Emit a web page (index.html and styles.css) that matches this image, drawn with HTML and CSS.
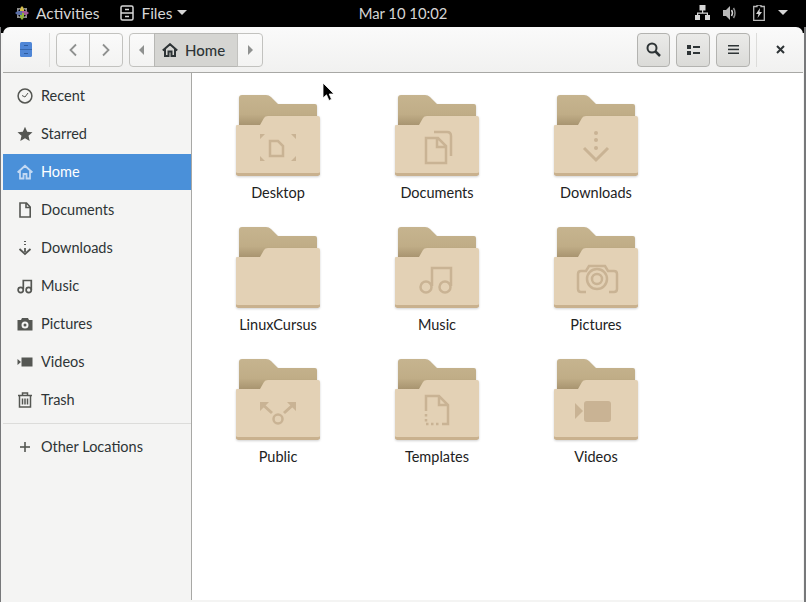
FILE: index.html
```html
<!DOCTYPE html>
<html lang="en">
<head>
    <meta charset="UTF-8">
    <title>Home - Files</title>
    <link rel="stylesheet" href="styles.css">
</head>
<body>

<svg class="defs" width="0" height="0">
    <defs>
        <linearGradient id="back-fill" x1="0" y1="0" x2="0" y2="1">
            <stop offset="0" stop-color="#c6b48f"/>
            <stop offset="0.6" stop-color="#c0ad87"/>
            <stop offset="1" stop-color="#a4906c"/>
        </linearGradient>
        <symbol id="folder" viewBox="0 0 84 82">
            <path d="M3 3Q3 0 6 0H30Q33 0 35 2L42 9H79Q81 9 81 11V32H3Z" fill="url(#back-fill)"/>
            <path d="M0 79Q0 81 4 81H80Q84 81 84 79V74H0Z" fill="#c9b18e"/>
            <path d="M0 31Q0 30 1 30H24L28 23Q29 21 32 21H82Q84 21 84 23V77Q84 78 82 78H2Q0 78 0 77Z" fill="#e3d1b5"/>
        </symbol>
    </defs>
</svg>

<div class="topbar">
    <div class="topbar-left">
        <span class="activities">
            <svg class="distro" width="16" height="16" viewBox="0 0 16 16">
                <path d="M8 1 10 3.500V8H6V3.500Z" fill="#d8c04a"/>
                <path d="M15 8 12.500 10H8V6H12.500Z" fill="#a35a9a"/>
                <path d="M8 15 6 12.500V8H10V12.500Z" fill="#8fb339"/>
                <path d="M1 8 3.500 6H8V10H3.500Z" fill="#5a6fa8"/>
                <path d="M3 3H7L3 7ZM13 3V7L9 3ZM13 13H9L13 9ZM3 13V9L7 13Z" fill="#8d8d8d"/>
            </svg>
            Activities
        </span>
        <span class="app-menu">
            <svg width="14" height="16" viewBox="0 0 14 16" fill="none" stroke="#d6d6d6" stroke-width="1.500">
                <rect x="1" y="1" width="12" height="14" rx="1.500"/>
                <path d="M1 8H13M5 4.500H9M5 11.500H9"/>
            </svg>
            Files
            <i class="caret"></i>
        </span>
    </div>
    <div class="clock">Mar 10 10:02</div>
    <div class="topbar-right">
        <svg width="15" height="15" viewBox="0 0 15 15" fill="#d6d6d6">
            <rect x="4.500" width="6" height="5.500"/>
            <rect x="7" y="5" width="1.200" height="3"/>
            <path d="M2 10V7.500H13V10H11.800V8.700H3.200V10Z"/>
            <rect y="10" width="5" height="5"/>
            <rect x="10" y="10" width="5" height="5"/>
        </svg>
        <svg class="volume" width="14" height="14" viewBox="0 0 14 14">
            <path d="M0 4H3L7 0V14L3 10H0Z" fill="#b8b8b8"/>
            <path d="M8.500 4Q10.500 7 8.500 10" fill="none" stroke="#d6d6d6" stroke-width="1.500"/>
            <path d="M10.500 2Q13.500 7 10.500 12" fill="none" stroke="#8c8c8c" stroke-width="1.500"/>
        </svg>
        <svg width="12" height="16" viewBox="0 0 12 16">
            <path d="M4 0H8V1.500H11.300V15.300H.7V1.500H4Z" fill="none" stroke="#b8b8b8" stroke-width="1.300"/>
            <path d="M7 3 3 9H5.500L4.500 13 9 7H6.500Z" fill="#d6d6d6"/>
        </svg>
        <i class="caret"></i>
    </div>
</div>

<div class="frame">
    <div class="window">
        <header class="headerbar">
            <svg class="app-icon" width="12" height="15" viewBox="0 0 12 15">
                <rect width="12" height="15" rx="1.500" fill="#4f86d6"/>
                <rect y="7" width="12" height="1" fill="#3768ad"/>
                <rect x="4" y="3" width="4" height="1" fill="#2f5c9e"/>
                <rect x="4" y="11" width="4" height="1" fill="#2f5c9e"/>
            </svg>
            <span class="vsep"></span>
            <div class="btn-group nav-group">
                <button class="btn">
                    <svg width="10" height="14" viewBox="0 0 10 14" fill="none" stroke="#8f9190" stroke-width="1.800"><path d="M8 1.500 2.500 7 8 12.500"/></svg>
                </button>
                <button class="btn">
                    <svg width="10" height="14" viewBox="0 0 10 14" fill="none" stroke="#8f9190" stroke-width="1.800"><path d="M2 1.500 7.500 7 2 12.500"/></svg>
                </button>
            </div>
            <div class="btn-group path-group">
                <button class="btn path-end">
                    <svg width="6" height="10" viewBox="0 0 6 10" fill="#8f9190"><path d="M5 0V10L0 5Z"/></svg>
                </button>
                <button class="btn path-current">
                    <svg width="16" height="14" viewBox="0 0 16 14" fill="none" stroke="#2e3436" stroke-width="2"><path d="M.8 7.500 8 1.200 15.200 7.500M3 6V13H6.500V8.500H9.500V13H13V6"/></svg>
                    Home
                </button>
                <button class="btn path-end">
                    <svg width="6" height="10" viewBox="0 0 6 10" fill="#8f9190"><path d="M1 0V10L6 5Z"/></svg>
                </button>
            </div>
            <div class="header-tools">
                <button class="btn tool tool-search">
                    <svg width="15" height="15" viewBox="0 0 15 15" fill="none" stroke="#2e3436" stroke-width="2"><circle cx="6" cy="6" r="4.500"/><path d="M9.500 9.500 14 14" stroke-width="2.500"/></svg>
                </button>
                <button class="btn tool">
                    <svg width="13" height="10" viewBox="0 0 13 10" fill="#2e3436"><rect width="4" height="4"/><rect y="6" width="4" height="4"/><rect x="6" y="1" width="7" height="2"/><rect x="6" y="7" width="7" height="2"/></svg>
                </button>
                <button class="btn tool">
                    <svg width="11" height="9" viewBox="0 0 11 9" fill="#2e3436"><rect width="11" height="1.500"/><rect y="3.700" width="11" height="1.500"/><rect y="7.500" width="11" height="1.500"/></svg>
                </button>
                <span class="vsep vsep-right"></span>
                <span class="close">
                    <svg width="9" height="9" viewBox="0 0 9 9" stroke="#2e3436" stroke-width="2"><path d="M1 1 8 8M8 1 1 8"/></svg>
                </span>
            </div>
        </header>

        <div class="content">
            <nav class="sidebar">
                <a class="side-row">
                    <svg class="side-icon" viewBox="0 0 16 16" fill="none" stroke="#555753" stroke-width="1.500"><circle cx="8" cy="8" r="6.900"/><path d="M5 7.500 8 9 11 5" stroke-width="1"/></svg>
                    Recent
                </a>
                <a class="side-row">
                    <svg class="side-icon" viewBox="0 0 16 16" fill="#555753"><path d="M8 .8 10.200 5.800 15.500 6.300 11.500 9.800 12.700 15 8 12.300 3.300 15 4.500 9.800.5 6.300 5.800 5.800Z"/></svg>
                    Starred
                </a>
                <a class="side-row active">
                    <svg class="side-icon" viewBox="0 0 16 16" fill="none" stroke="#c3d9f3" stroke-width="1.800"><path d="M.6 8.500 8 1.800 15.400 8.500M3 7V14.500H6.500V10H9.500V14.500H13V7"/></svg>
                    Home
                </a>
                <a class="side-row">
                    <svg class="side-icon" viewBox="0 0 16 16" fill="none" stroke="#555753" stroke-width="1.600"><path d="M3 1H9.500L13.200 5V15H3ZM9 1V5.500H13"/></svg>
                    Documents
                </a>
                <a class="side-row">
                    <svg class="side-icon" viewBox="0 0 16 16" fill="none" stroke="#555753" stroke-width="1.800"><path d="M2.500 9 8 14 13.500 9M8 8V12"/><path d="M8 1V2M8 4V5" stroke-width="2"/></svg>
                    Downloads
                </a>
                <a class="side-row">
                    <svg class="side-icon" viewBox="0 0 16 16" fill="none" stroke="#555753" stroke-width="1.700"><circle cx="3.700" cy="12" r="2.600"/><circle cx="11.700" cy="12" r="2.600"/><path d="M6.300 11V2.500H14.300V12"/></svg>
                    Music
                </a>
                <a class="side-row">
                    <svg class="side-icon" viewBox="0 0 16 16" fill="#555753"><path fill-rule="evenodd" d="M5 2H11L12 4H15.500V14.500H.5V4H4ZM8 5.500A3.500 3.500 0 1 0 8 12.500 3.500 3.500 0 1 0 8 5.500ZM8 7.500A1.500 1.500 0 1 1 8 10.500 1.500 1.500 0 1 1 8 7.500Z"/></svg>
                    Pictures
                </a>
                <a class="side-row">
                    <svg class="side-icon" viewBox="0 0 16 16" fill="#555753"><path d="M.5 5 4 8 .5 11Z"/><rect x="4.500" y="3.500" width="11" height="9"/></svg>
                    Videos
                </a>
                <a class="side-row">
                    <svg class="side-icon" viewBox="0 0 16 16" fill="none" stroke="#555753" stroke-width="1.500"><path d="M1 3.500H15M5.500 3V1H10.500V3M2.500 4V15H13.500V4"/><path d="M5.500 6.500V12.500M8 6.500V12.500M10.500 6.500V12.500"/></svg>
                    Trash
                </a>
                <hr class="side-sep">
                <a class="side-row">
                    <svg class="side-icon" viewBox="0 0 16 16" fill="#555753"><rect x="3" y="7.200" width="10" height="1.600"/><rect x="7.200" y="3" width="1.600" height="10"/></svg>
                    Other Locations
                </a>
            </nav>

            <main class="files">
                <div class="file">
                    <svg class="folder" viewBox="0 0 84 82">
                        <use href="#folder" width="84" height="82"/>
                        <path class="emblem" d="M34 46H42L47 51V61H34Z"/>
                        <path class="emblem-fill" d="M24 39H29L24 44ZM60 39V44L55 39ZM60 66H55L60 61ZM24 66V61L29 66Z"/>
                    </svg>
                    <span>Desktop</span>
                </div>
                <div class="file">
                    <svg class="folder" viewBox="0 0 84 82">
                        <use href="#folder" width="84" height="82"/>
                        <path class="emblem" d="M31 43H43L51 51V68H31ZM42 43V52H51"/>
                        <path class="emblem" d="M39 37H52Q56 37 56 41V61"/>
                    </svg>
                    <span>Documents</span>
                </div>
                <div class="file">
                    <svg class="folder" viewBox="0 0 84 82">
                        <use href="#folder" width="84" height="82"/>
                        <circle class="emblem-fill" cx="42" cy="38" r="2"/>
                        <circle class="emblem-fill" cx="42" cy="45" r="2"/>
                        <circle class="emblem-fill" cx="42" cy="53" r="2"/>
                        <path class="emblem thick" d="M30 53 42 65 54 53"/>
                    </svg>
                    <span>Downloads</span>
                </div>
                <div class="file">
                    <svg class="folder" viewBox="0 0 84 82">
                        <use href="#folder" width="84" height="82"/>
                    </svg>
                    <span>LinuxCursus</span>
                </div>
                <div class="file">
                    <svg class="folder" viewBox="0 0 84 82">
                        <use href="#folder" width="84" height="82"/>
                        <circle class="emblem" cx="31" cy="60" r="5.500"/>
                        <circle class="emblem" cx="50" cy="60" r="5.500"/>
                        <path class="emblem" d="M37 59V41H56V59"/>
                    </svg>
                    <span>Music</span>
                </div>
                <div class="file">
                    <svg class="folder" viewBox="0 0 84 82">
                        <use href="#folder" width="84" height="82"/>
                        <path class="emblem" d="M32 65H27Q24 65 24 62V47Q24 44 27 44H32L35 39H51L54 44H60Q63 44 63 47V62Q63 65 60 65H55"/>
                        <circle class="emblem" cx="43" cy="52" r="10"/>
                        <circle class="emblem" cx="43" cy="52" r="5"/>
                    </svg>
                    <span>Pictures</span>
                </div>
                <div class="file">
                    <svg class="folder" viewBox="0 0 84 82">
                        <use href="#folder" width="84" height="82"/>
                        <circle class="emblem" cx="42" cy="60" r="4.500"/>
                        <path class="emblem thick" d="M36 54 26 45M48 54 58 45"/>
                        <path class="emblem-fill" d="M24 43H33L24 52ZM60 43V52L51 43Z"/>
                    </svg>
                    <span>Public</span>
                </div>
                <div class="file">
                    <svg class="folder" viewBox="0 0 84 82">
                        <use href="#folder" width="84" height="82"/>
                        <path class="emblem" d="M31 52V37H44L53 46V65H47M44 37V46H53"/>
                        <path class="emblem dashed" d="M31 55V65H44"/>
                    </svg>
                    <span>Templates</span>
                </div>
                <div class="file">
                    <svg class="folder" viewBox="0 0 84 82">
                        <use href="#folder" width="84" height="82"/>
                        <path class="emblem-fill" d="M21 44 29 52 21 60Z"/>
                        <rect class="emblem-fill" x="30" y="42" width="27" height="21" rx="3"/>
                    </svg>
                    <span>Videos</span>
                </div>
            </main>
        </div>
    </div>
</div>

<!-- mouse pointer sits over the window -->
<svg class="pointer" width="14" height="21" viewBox="0 0 14 21">
    <path d="M1 1V16L4.500 12.800 7 18.500 9.500 17.300 7.200 12H12Z" fill="#000" stroke="#fff" stroke-width=".8"/>
</svg>

</body>
</html>
```

FILE: styles.css
```css
/* Page */
body {
    margin: 0;
    width: 806px;
    height: 602px;
    overflow: hidden;
    background: #000;
    font-family: 'Lato', 'Noto Sans', sans-serif;
    font-size: 14.5px;
    color: #2e3436;
}

.defs {
    display: block;
}

button {
    font: inherit;
    color: inherit;
    padding: 0;
}

/* Top bar */
.topbar {
    height: 27px;
    box-sizing: border-box;
    padding-bottom: 2px;
    display: grid;
    grid-template-columns: 1fr auto 1fr;
    align-items: center;
    color: #d6d6d6;
}

.topbar-left,
.topbar-right {
    display: flex;
    align-items: center;
}

.activities {
    display: flex;
    align-items: center;
    gap: 6px;
    margin-left: 14px;
    font-size: 15.5px;
}

.app-menu {
    display: flex;
    align-items: center;
    gap: 7px;
    margin-left: 21px;
    font-size: 15.5px;
}

.clock {
    font-size: 14.8px;
}

.topbar-right {
    justify-content: flex-end;
    gap: 13px;
    padding-right: 18px;
}

.volume {
    margin-right: 3px;
}

.caret {
    display: block;
    width: 0;
    height: 0;
    border-left: 5px solid transparent;
    border-right: 5px solid transparent;
    border-top: 5px solid #d6d6d6;
}

.app-menu .caret {
    margin-left: -2px;
}

/* Window frame */
.frame {
    height: 575px;
    box-sizing: border-box;
    padding: 0 1px 2px 2px;
    border-left: 1px solid #77787a;
    border-right: 2px solid #77787a;
    background: linear-gradient(#000 0, #000 6px, #f4f4f3 6px);
}

.window {
    height: 100%;
    display: flex;
    flex-direction: column;
    border-radius: 7px 7px 0 0;
    overflow: hidden;
}

/* Header bar */
.headerbar {
    height: 46px;
    flex: none;
    box-sizing: border-box;
    display: flex;
    align-items: center;
    padding-left: 17px;
    background: linear-gradient(#fafafa, #f1f1f0);
    border-bottom: 1px solid #a8a8a5;
}

.app-icon {
    flex: none;
}

.vsep {
    width: 1px;
    height: 34px;
    margin: 0 6px 0 17px;
    background: #dcdcda;
}

.btn {
    display: flex;
    align-items: center;
    justify-content: center;
    height: 34px;
    box-sizing: border-box;
    border: 1px solid #c2c2bf;
    border-radius: 4px;
    background: linear-gradient(#fafafa, #f3f3f2);
}

.btn-group {
    display: flex;
}

.btn-group .btn {
    border-radius: 0;
    margin-left: -1px;
}

.btn-group .btn:first-child {
    border-radius: 4px 0 0 4px;
    margin-left: 0;
}

.btn-group .btn:last-child {
    border-radius: 0 4px 4px 0;
}

.nav-group .btn {
    width: 34px;
}

.path-group {
    margin-left: 6px;
}

.path-end {
    width: 26px;
}

.path-current {
    width: 84px;
    justify-content: flex-start;
    padding-left: 7px;
    gap: 7px;
    background: #d5d5d2;
    border-color: #b7b7b4;
    font-size: 15px;
    font-weight: 500;
}

.header-tools {
    display: flex;
    align-items: center;
    gap: 6px;
    margin-left: auto;
}

.tool {
    width: 34px;
    background: linear-gradient(#ebebe9, #dbdbd8);
    border-color: #b3b3b0;
}

.tool-search {
    width: 33px;
}

.vsep-right {
    margin: 0;
}

.close {
    display: flex;
    align-items: center;
    justify-content: center;
    width: 45px;
    margin-left: -5px;
}

/* Sidebar */
.content {
    flex: 1;
    min-height: 0;
    display: flex;
}

.sidebar {
    width: 188px;
    flex: none;
    padding-top: 5px;
    background: #f4f4f3;
    border-right: 1px solid #a8a8a5;
    display: flex;
    flex-direction: column;
    gap: 2px;
}

.side-row {
    height: 36px;
    box-sizing: border-box;
    display: flex;
    align-items: center;
    gap: 8px;
    padding: 0 0 2px 14px;
}

.side-row.active {
    background: #4a90d9;
    color: #fff;
}

.side-icon {
    width: 16px;
    height: 16px;
    flex: none;
    margin-top: 2px;
}

.side-sep {
    width: 100%;
    height: 1px;
    margin: 3px 0;
    border: none;
    background: #dcdcda;
}

/* Icon grid */
.files {
    flex: 1;
    background: #fff;
    padding: 22px 0 0 6.5px;
    display: grid;
    grid-template-columns: repeat(3, 159px);
    grid-auto-rows: 132px;
    align-content: start;
}

.file {
    display: flex;
    flex-direction: column;
    align-items: center;
    color: #222;
}

.folder {
    width: 84px;
    height: 82px;
    margin-bottom: 7px;
    filter: drop-shadow(0 1px 1px rgba(0, 0, 0, 0.18));
}

.emblem {
    fill: none;
    stroke: #c9b394;
    stroke-width: 2.5;
}

.emblem.thick {
    stroke-width: 3;
}

.emblem.dashed {
    stroke-dasharray: 2.5 2.5;
}

.emblem-fill {
    fill: #c9b394;
}

/* Pointer */
.pointer {
    position: absolute;
    left: 322px;
    top: 82px;
}
```
